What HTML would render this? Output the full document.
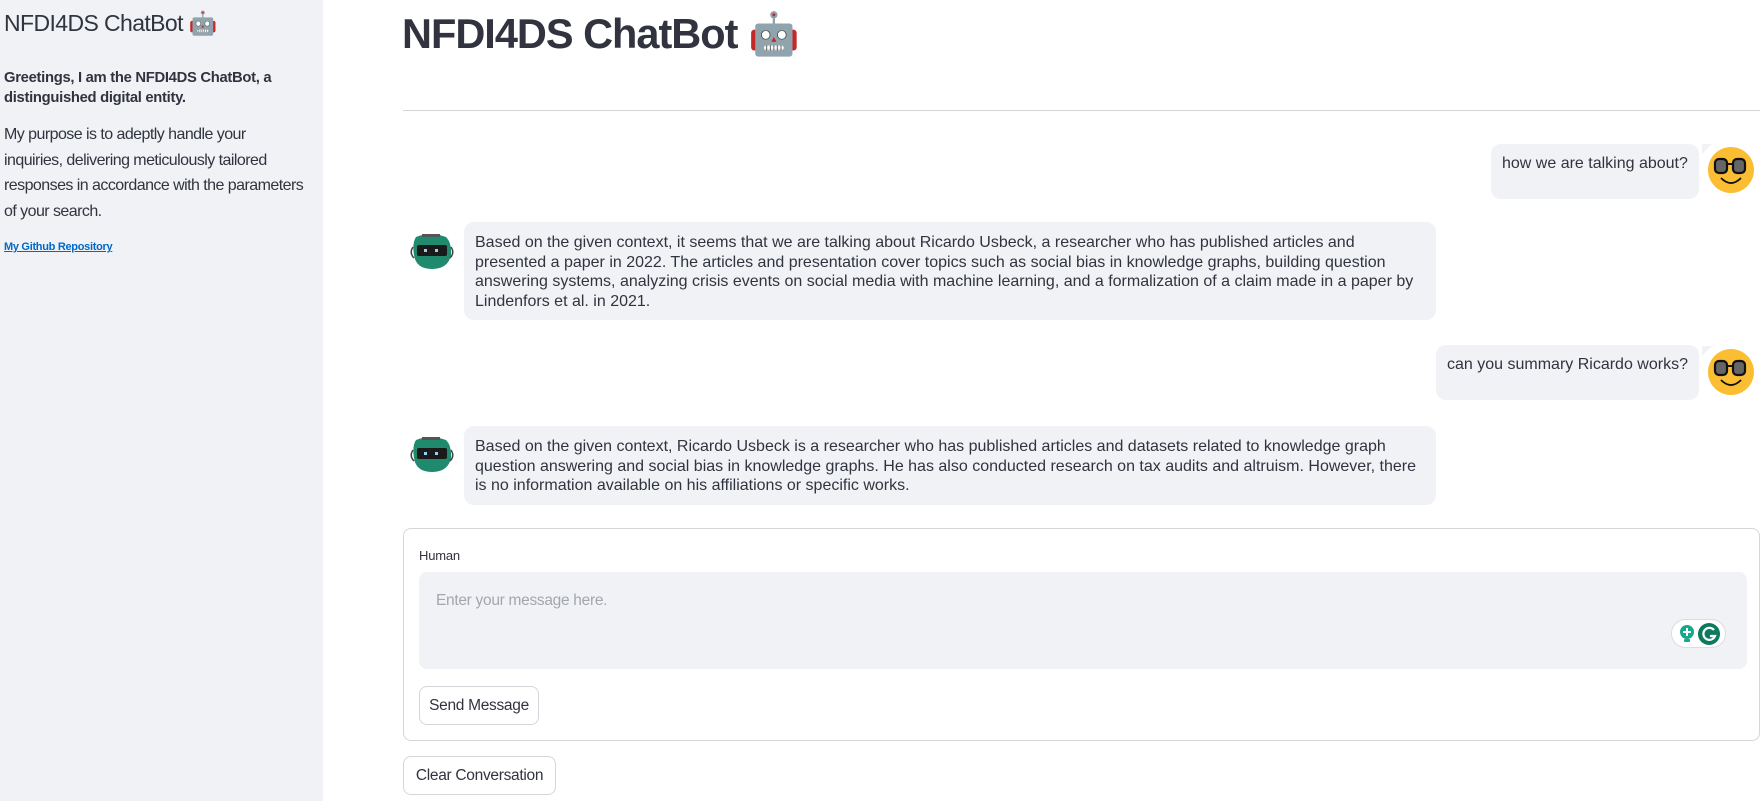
<!DOCTYPE html>
<html><head><meta charset="utf-8"><style>
*{box-sizing:border-box;margin:0;padding:0}
body{width:1762px;height:801px;overflow:hidden;background:#fff;font-family:"Liberation Sans",sans-serif;color:#31333f;position:relative}
.sb{position:absolute;left:0;top:0;width:323px;height:801px;background:#f0f2f6}
.abs{position:absolute;white-space:nowrap}
.bub{position:absolute;background:#f0f2f6;border-radius:10px;font-size:16px;line-height:19.6px;color:#31333f;white-space:nowrap}
.btn{position:absolute;border:1px solid #d4d6dc;border-radius:8px;background:#fff;font-size:15.5px;display:flex;align-items:center;justify-content:center;font-family:"Liberation Sans",sans-serif;letter-spacing:-0.3px}
</style></head><body>
<div class="sb">
<div class="abs" style="left:4px;top:10px;font-size:23px;letter-spacing:-0.6px">NFDI4DS ChatBot 🤖</div>
<div class="abs" style="left:4px;top:68px;font-size:14.8px;font-weight:bold;line-height:20px;letter-spacing:-0.3px">Greetings, I am the NFDI4DS ChatBot, a<br>distinguished digital entity.</div>
<div class="abs" style="left:4px;top:122px;font-size:16px;line-height:25.7px;letter-spacing:-0.55px">My purpose is to adeptly handle your<br>inquiries, delivering meticulously tailored<br>responses in accordance with the parameters<br>of your search.</div>
<div class="abs" style="left:4px;top:241px;font-size:11px;font-weight:bold;color:#0068c9;text-decoration:underline;letter-spacing:-0.3px">My Github Repository</div>
</div>
<div class="abs" style="left:402px;top:10px;font-size:41.5px;font-weight:bold;letter-spacing:-1px">NFDI4DS ChatBot 🤖</div>
<div style="position:absolute;left:403px;top:110px;width:1357px;height:1px;background:#d6d6d9"></div>

<div class="bub" style="left:1491px;top:144px;width:208px;height:55px;padding:10px 0 0 11px">how we are talking about?</div>
<svg style="position:absolute;left:1702px;top:144px" width="60" height="50" viewBox="0 0 60 50"><path d="M0 0h10l-10 10z" fill="#f0f2f6"/><circle cx="29" cy="26" r="23" fill="#fbbd32"/><rect x="13" y="15" width="12" height="14" rx="4" fill="#666" stroke="#111" stroke-width="2.2"/><rect x="31" y="15" width="12" height="14" rx="4" fill="#666" stroke="#111" stroke-width="2.2"/><path d="M25 20h6" stroke="#111" stroke-width="2"/><path d="M19 34q10 10 20 0" stroke="#111" stroke-width="1.8" fill="none"/></svg>

<svg style="position:absolute;left:408px;top:233px" width="60" height="40" viewBox="0 0 60 40"><path d="M8 4q14-6 30 0q6 6 5 18q-3 14-19 14q-16 0-18-14q-2-12 2-18z" fill="#1f8a6e"/><rect x="14" y="1" width="18" height="3" fill="#555"/><rect x="9" y="12" width="30" height="11" rx="2" fill="#1a1a1a"/><rect x="16" y="16" width="3" height="3" fill="#9cf"/><rect x="27" y="16" width="3" height="3" fill="#9cf"/><path d="M5 14q-4 6 1 11M43 14q4 6-1 11" stroke="#444" stroke-width="1.5" fill="none"/></svg>
<div class="bub" style="left:464px;top:222px;width:972px;height:98px;padding:11px 11px 0 11px">Based on the given context, it seems that we are talking about Ricardo Usbeck, a researcher who has published articles and<br>presented a paper in 2022. The articles and presentation cover topics such as social bias in knowledge graphs, building question<br>answering systems, analyzing crisis events on social media with machine learning, and a formalization of a claim made in a paper by<br>Lindenfors et al. in 2021.</div>

<div class="bub" style="left:1436px;top:345px;width:263px;height:55px;padding:10px 0 0 11px">can you summary Ricardo works?</div>
<svg style="position:absolute;left:1702px;top:346px" width="60" height="50" viewBox="0 0 60 50"><path d="M0 0h10l-10 10z" fill="#f0f2f6"/><circle cx="29" cy="26" r="23" fill="#fbbd32"/><rect x="13" y="15" width="12" height="14" rx="4" fill="#666" stroke="#111" stroke-width="2.2"/><rect x="31" y="15" width="12" height="14" rx="4" fill="#666" stroke="#111" stroke-width="2.2"/><path d="M25 20h6" stroke="#111" stroke-width="2"/><path d="M19 34q10 10 20 0" stroke="#111" stroke-width="1.8" fill="none"/></svg>

<svg style="position:absolute;left:408px;top:436px" width="60" height="40" viewBox="0 0 60 40"><path d="M8 4q14-6 30 0q6 6 5 18q-3 14-19 14q-16 0-18-14q-2-12 2-18z" fill="#1f8a6e"/><rect x="14" y="1" width="18" height="3" fill="#555"/><rect x="9" y="12" width="30" height="11" rx="2" fill="#1a1a1a"/><rect x="16" y="16" width="3" height="3" fill="#9cf"/><rect x="27" y="16" width="3" height="3" fill="#9cf"/><path d="M5 14q-4 6 1 11M43 14q4 6-1 11" stroke="#444" stroke-width="1.5" fill="none"/></svg>
<div class="bub" style="left:464px;top:426px;width:972px;height:79px;padding:11px 11px 0 11px">Based on the given context, Ricardo Usbeck is a researcher who has published articles and datasets related to knowledge graph<br>question answering and social bias in knowledge graphs. He has also conducted research on tax audits and altruism. However, there<br>is no information available on his affiliations or specific works.</div>

<div style="position:absolute;left:403px;top:528px;width:1357px;height:213px;border:1px solid #d6d6d9;border-radius:8px"></div>
<div class="abs" style="left:419px;top:548px;font-size:13px;letter-spacing:-0.2px">Human</div>
<div style="position:absolute;left:419px;top:572px;width:1328px;height:97px;background:#f0f2f6;border-radius:8px"></div>
<div class="abs" style="left:436px;top:592px;font-size:15.5px;color:#a3a6ad;letter-spacing:-0.3px">Enter your message here.</div>
<div style="position:absolute;left:1671px;top:619px;width:55px;height:29px;background:#fff;border:1px solid #ddd;border-radius:15px"></div>
<svg style="position:absolute;left:1677px;top:622px" width="46" height="24" viewBox="0 0 46 24"><circle cx="10" cy="10" r="7" fill="#15a88b"/><rect x="7" y="17" width="6" height="3" rx="1" fill="#15a88b"/><path d="M10 6v8M6 10h8" stroke="#fff" stroke-width="2"/><circle cx="32" cy="12" r="11" fill="#0c7a5f"/><path d="M37 8a6 6 0 1 0 1 6h-5" stroke="#fff" stroke-width="2.2" fill="none"/></svg>
<div class="btn" style="left:419px;top:686px;width:120px;height:39px">Send Message</div>
<div class="btn" style="left:403px;top:756px;width:153px;height:39px">Clear Conversation</div>
</body></html>
